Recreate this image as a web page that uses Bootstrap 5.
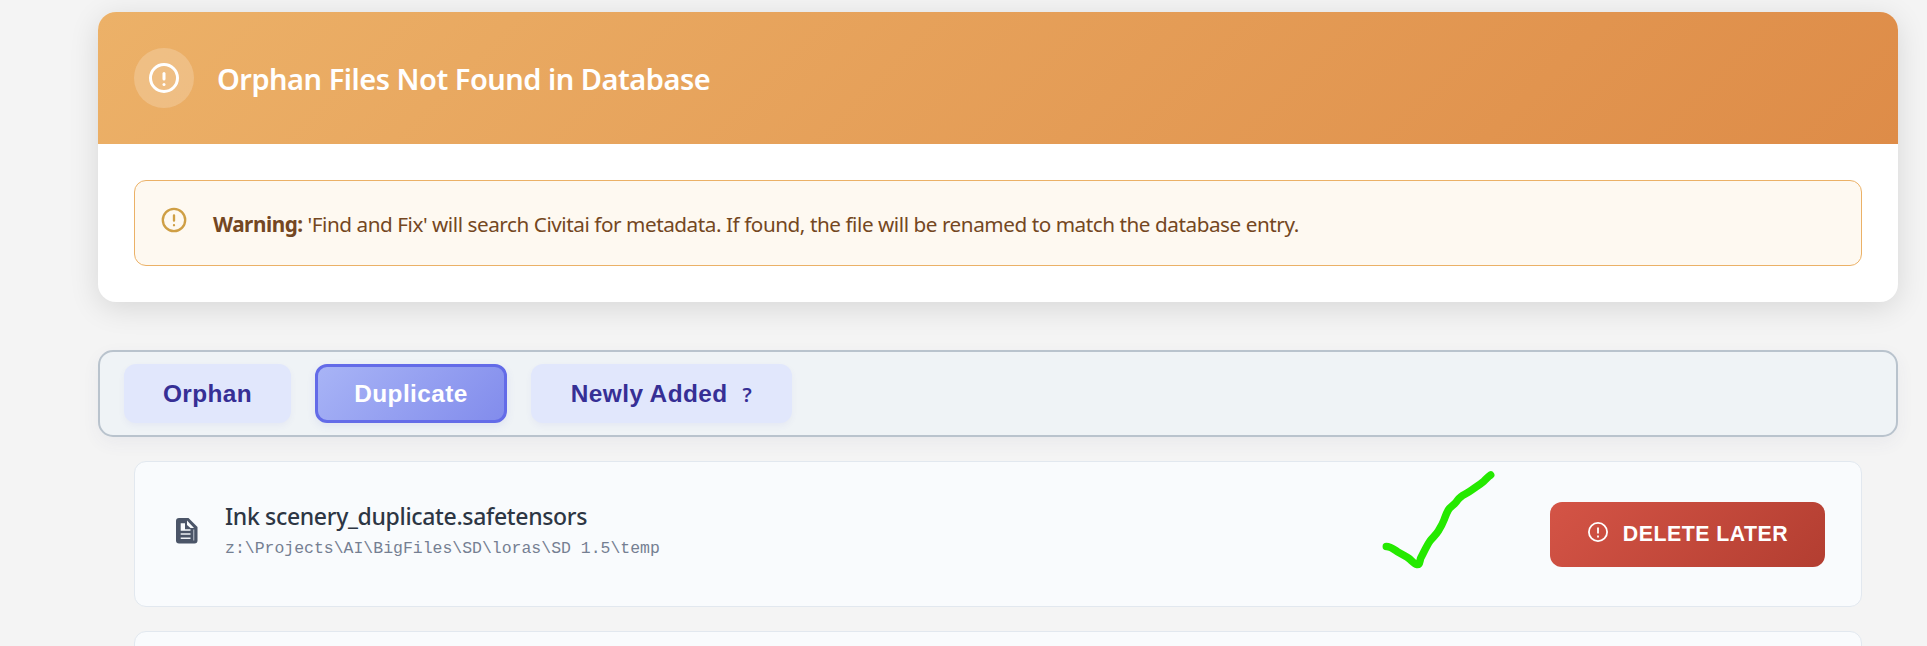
<!DOCTYPE html>
<html lang="en">
<head>
<meta charset="utf-8">
<title>Orphan Files</title>
<link href="https://cdn.jsdelivr.net/npm/bootstrap@5.3.0/dist/css/bootstrap.min.css" rel="stylesheet">
<style>
body{background:#f4f4f4;font-family:"Noto Sans",sans-serif;height:646px;overflow:hidden}
.page{width:1800px;height:646px;margin-left:98px;padding-top:12px}
.panel{border:0;border-radius:18px;box-shadow:0 6px 30px rgba(0,0,0,.12);height:290px;overflow:hidden}
.panel-head{height:132px;padding:0 36px;gap:23px;background:linear-gradient(135deg,#ecb168,#de8c48)}
.disc{width:60px;height:60px;background:rgba(255,255,255,.2)}
.title{font-size:29px;font-weight:600;color:#fff;line-height:40px;letter-spacing:-.49px;padding-top:2px}
.panel-main{padding:36px}
.notice{height:86px;border:1px solid #ebb167;border-radius:12px;background:#fef9f1;color:#744722;padding:0 24px;gap:24px;font-size:20.7px;letter-spacing:-.445px}
.notice svg{margin:-6px 1px 0 1px}
.notice-text{padding-top:4px}
.tabs-bar{margin-top:48px;height:87px;border:2px solid #b9c3cd;border-radius:15px;background:#eff3f6;padding:0 24px;gap:24px;box-shadow:0 6px 18px rgba(60,60,120,.06)}
.tab-btn{height:59px;border:0;border-radius:12px;background:#e1e7fc;color:#362f95;font:700 24.4px "Liberation Sans",sans-serif;letter-spacing:.4px;box-shadow:0 3px 6px rgba(80,90,200,.06);padding:1px 0 0}
.tab-btn.current{border:3px solid #636be8;background:linear-gradient(135deg,#a8b4f6,#828cec);color:#fff;box-shadow:0 3px 9px rgba(80,90,200,.1)}
.w-orphan{width:167px}.w-dup{width:192px}.w-new{width:261px}
.hint{font:600 20px "Noto Sans",sans-serif;margin-left:15px}
.files{margin:24px 36px 0;gap:24px;height:161px}
.file-row{height:146px;border:1px solid #e2e8ef;border-radius:12px;background:#f9fbfd;padding:0 36px 0 37px}
.file-row>svg{margin-bottom:6px}
.file-text{margin-left:23px;padding-bottom:6px}
.file-name{font-size:23px;font-weight:500;line-height:32px;letter-spacing:-.33px;color:#2d3644;margin-bottom:4px}
.file-path{font:16.48px/26px "Liberation Mono",monospace;color:#757f92}
.del{width:275px;height:65px;border:0;border-radius:12px;background:linear-gradient(135deg,#d45446,#b33e31);color:#fff;font:700 21.3px "Liberation Sans",sans-serif;letter-spacing:.5px;gap:12px}
.del svg{margin:-4px 1px 0 -1px}
.tick{left:1380px;top:468px;pointer-events:none}
</style>
</head>
<body>
<main class="page overflow-hidden-y">
  <section class="card panel">
    <header class="panel-head d-flex align-items-center">
      <span class="disc rounded-circle d-flex align-items-center justify-content-center flex-shrink-0">
        <svg width="36" height="36" viewBox="0 0 24 24" fill="#fff"><path d="M12 2a10 10 0 1 0 0 20 10 10 0 0 0 0-20zm0 18a8 8 0 1 1 0-16 8 8 0 0 1 0 16z"/><rect x="11" y="8" width="2" height="5.6" rx="1"/><circle cx="12" cy="16.4" r="1"/></svg>
      </span>
      <h1 class="title m-0">Orphan Files Not Found in Database</h1>
    </header>
    <div class="panel-main">
      <div class="notice d-flex align-items-center">
        <svg width="28" height="28" viewBox="0 0 24 24" fill="none" stroke="#cf9f45" stroke-width="2" stroke-linecap="round"><circle cx="12" cy="12" r="9.6"/><path d="M12 8v4.600M12 16.400v.1"/></svg>
        <div class="notice-text"><strong>Warning:</strong> 'Find and Fix' will search Civitai for metadata. If found, the file will be renamed to match the database entry.</div>
      </div>
    </div>
  </section>

  <nav class="tabs-bar d-flex align-items-center">
    <button class="tab-btn w-orphan">Orphan</button>
    <button class="tab-btn current w-dup">Duplicate</button>
    <button class="tab-btn w-new">Newly Added<span class="hint">?</span></button>
  </nav>

  <section class="files d-flex flex-column">
    <article class="file-row d-flex align-items-center flex-shrink-0">
      <svg width="30" height="30" viewBox="0 0 30 30">
        <path fill="#4b5568" d="M7 2h9.500l9 9v13.500a3 3 0 0 1-3 3H7a3 3 0 0 1-3-3V5a3 3 0 0 1 3-3z"/>
        <path fill="#f9fbfd" d="M8.700 7.300h4.300v6h5.500v1.500H8.700zM15 4.500l7 7.500h-3.500L15 9z"/>
        <path fill="none" stroke="#eef1f5" stroke-width="1.600" d="M8.700 18h9.800M8.700 22.300h9.800"/>
        <path fill="none" stroke="#a4abb7" stroke-width="1.300" d="M21.700 13.500v11"/>
      </svg>
      <div class="file-text">
        <div class="file-name">Ink scenery_duplicate.safetensors</div>
        <div class="file-path">z:\Projects\AI\BigFiles\SD\loras\SD 1.5\temp</div>
      </div>
      <button class="del ms-auto d-flex align-items-center justify-content-center">
        <svg width="24" height="24" viewBox="0 0 24 24" fill="none" stroke="#fff" stroke-width="1.800"><circle cx="12" cy="12" r="9.100"/><path d="M12 7.500v6M12 15.500v2"/></svg>
        <span>DELETE LATER</span>
      </button>
    </article>
    <article class="file-row flex-shrink-0"></article>
  </section>
</main>
<svg class="tick position-absolute" width="118" height="105" viewBox="1380 468 118 105" fill="none" stroke="#25e900" stroke-width="7.500" stroke-linecap="round" stroke-linejoin="round"><path d="M1386.300 546.500C1391 546.500 1394 549.500 1399 552.700S1406 556 1409 558.500S1414 564 1417 564.500C1420.500 565 1419.500 560 1421 557.500S1427 545 1430 541S1435.500 535.500 1438.300 531S1442.500 524 1444 520S1446.500 513 1448.300 510S1453.500 505.500 1456 502.300S1458 499 1461 496.700S1467 493.500 1471.700 490S1480 484.500 1483.700 481.300S1487.500 477 1490.700 475"/></svg>
<script src="https://cdn.jsdelivr.net/npm/bootstrap@5.3.0/dist/js/bootstrap.bundle.min.js"></script>
</body>
</html>
